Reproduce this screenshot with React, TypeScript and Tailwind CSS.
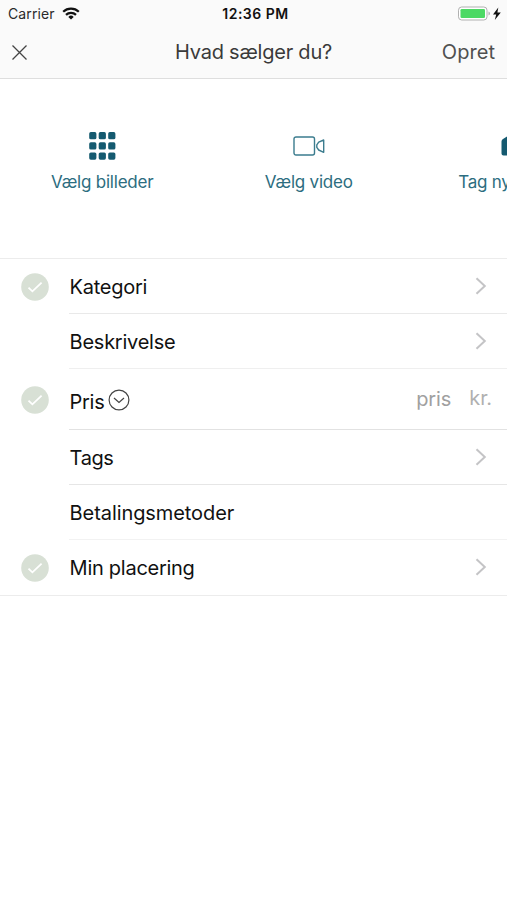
import type { ReactNode } from "react";

interface FormRow {
  label: string;
  labelClass: string;
  rowClass: string;
  checked?: boolean;
  chevron?: boolean;
  price?: boolean;
}

const rows: FormRow[] = [
  { label: "Kategori", labelClass: "tracking-[-0.25px]", rowClass: "h-[55px] border-[#e9e9e9]", checked: true, chevron: true },
  { label: "Beskrivelse", labelClass: "tracking-[-0.25px]", rowClass: "h-[55px] border-[#efefef]", chevron: true },
  { label: "Pris", labelClass: "tracking-[-0.3px]", rowClass: "h-[61px] border-[#e2e2e2]", checked: true, price: true },
  { label: "Tags", labelClass: "tracking-[-0.4px]", rowClass: "h-[55px] border-[#e6e6e6]", chevron: true },
  { label: "Betalingsmetoder", labelClass: "tracking-[-0.08px]", rowClass: "h-[55px] border-[#f2f2f2]" },
  { label: "Min placering", labelClass: "tracking-[-0.27px]", rowClass: "h-[55px] border-transparent", checked: true, chevron: true },
];

function StatusBar() {
  return (
    <div className="grid h-[27px] grid-cols-3 items-center">
      <div className="flex items-center gap-[7px] pl-2">
        <span className="text-[14px] leading-none tracking-[0.12px] text-[#2a2a2a]">Carrier</span>
        <svg width="18" height="13" viewBox="0 0 18 13" fill="none" stroke="#111" strokeWidth="2.2">
          <path d="M1.2 4.8a11.2 11.2 0 0 1 15.6 0" />
          <path d="M4 7.9a7.1 7.1 0 0 1 10 0" />
          <path d="M9 12.6 6.3 9.9a3.9 3.9 0 0 1 5.4 0Z" fill="#111" stroke="none" />
        </svg>
      </div>
      <span className="whitespace-nowrap pl-1 text-center text-[14px] font-semibold leading-none tracking-[0.5px] text-[#111]">12:36 PM</span>
      <div className="flex items-center justify-end pr-[5px]">
        <svg width="45" height="16" viewBox="0 0 45 16">
          <rect x="1.500" y="1" width="28.500" height="13" rx="3.200" fill="#fff" stroke="#b0b0b0" />
          <rect x="3.500" y="3" width="24.500" height="9" rx="1.300" fill="#4cd964" />
          <path d="M31.500 5.500v4c2-.7 2-3.300 0-4Z" fill="#b0b0b0" />
          <path d="M41.300 1.500 36 8.500h3.200l-1.400 5.500 6-7.500h-3.400Z" fill="#111" />
        </svg>
      </div>
    </div>
  );
}

function NavBar() {
  return (
    <div className="grid h-[51px] grid-cols-[100px_1fr_100px] items-center pb-px text-[20px] leading-none text-[#3a3a3a]">
      <svg className="ml-3" width="15" height="15" viewBox="0 0 15 15" stroke="#444" strokeWidth="1.3">
        <path d="M0.500 0.500 14.500 14.500M14.500 0.500 0.500 14.500" />
      </svg>
      <h1 className="text-center tracking-[-0.22px]">Hvad sælger du?</h1>
      <span className="pr-3 text-right tracking-[0.05px] text-[#505050]">Opret</span>
    </div>
  );
}

function MediaOption({ label, children }: { label: string; children: ReactNode }) {
  return (
    <div className="flex w-[206.5px] shrink-0 flex-col items-center">
      <div className="flex h-[30px] items-center">{children}</div>
      <span className="mt-[11px] whitespace-nowrap text-[17px] leading-[20px] tracking-[-0.22px]">{label}</span>
    </div>
  );
}

function GridIcon() {
  return (
    <svg width="27" height="28" viewBox="0 0 27 28" fill="#155a70">
      {[0, 10.2, 20.4].map((y) =>
        [0, 9.5, 19].map((x) => <rect key={`${x}-${y}`} x={x + 0.2} y={y + 0.1} width="7.200" height="7.200" rx="1.600" />)
      )}
    </svg>
  );
}

function VideoIcon() {
  return (
    <svg width="32" height="20" viewBox="0 0 32 20" fill="none" stroke="#3b7c8e" strokeWidth="1.400" strokeLinejoin="round">
      <rect x="1" y="1" width="20.500" height="18" rx="2" />
      <path d="M30.700 4v12.300l-5-2.300-1.900-2.600V8.800l1.900-2.600Z" />
    </svg>
  );
}

function CameraIcon() {
  return (
    <svg width="28" height="20" viewBox="0 0 28 20">
      <path d="M2 3 7 0h14l5 3a3 3 0 0 1 1.500 2.500v12A2 2 0 0 1 25.500 19.500h-23a2 2 0 0 1-2-2v-12A3 3 0 0 1 2 3Z" fill="#155a70" />
      <circle cx="14" cy="11" r="5" fill="#fff" />
    </svg>
  );
}

function CheckBadge() {
  return (
    <svg width="28" height="28" viewBox="0 0 28 28" fill="none">
      <circle cx="14" cy="14" r="13.800" fill="#d8e0d5" />
      <path d="m7.500 14.600 3.900 3.700 9.200-8.600" stroke="#fff" strokeWidth="1.800" />
    </svg>
  );
}

function Chevron() {
  return (
    <svg className="mr-5" width="12" height="18" viewBox="0 0 12 18" fill="none" stroke="#c4c4c6" strokeWidth="2">
      <path d="m1.500 1.200 8.300 7.800-8.300 7.800" />
    </svg>
  );
}

function Row({ row }: { row: FormRow }) {
  return (
    <div className="flex">
      <div className="flex w-[69px] items-center pl-[21px]">{row.checked && <CheckBadge />}</div>
      <div className={`flex flex-1 items-center justify-between border-b ${row.rowClass}`}>
        <div className={`flex items-center gap-1 pl-[0.6px] ${row.price ? "pt-1.5" : "pt-0.5"}`}>
          <span className={`text-[20px] leading-[24px] text-[#111] ${row.labelClass}`}>{row.label}</span>
          {row.price && (
            <svg className="-mt-1" width="22" height="22" viewBox="0 0 22 22" fill="none" stroke="#444" strokeWidth="1.200">
              <circle cx="11" cy="11" r="9.900" />
              <path d="m6 9 5 4.500L16 9" />
            </svg>
          )}
        </div>
        {row.price && (
          <div className="flex gap-[18px] pr-[15px] text-[20px] leading-[24px]">
            <span className="tracking-[-0.1px] text-[#a0a0a0]">pris</span>
            <span className="-mt-px tracking-[-0.1px] text-[#b0b0b0]">kr.</span>
          </div>
        )}
        {row.chevron && <Chevron />}
      </div>
    </div>
  );
}

export default function App() {
  return (
    <div className="h-[900px] w-[507px] overflow-hidden bg-white font-['Inter','Liberation_Sans',sans-serif]">
      <header className="border-b border-[#dedede] bg-[#fafafa]">
        <StatusBar />
        <NavBar />
      </header>

      <section className="-ml-px flex h-[179px] overflow-hidden pt-[52px] text-[#2c6d80]">
        <MediaOption label="Vælg billeder">
          <GridIcon />
        </MediaOption>
        <MediaOption label="Vælg video">
          <VideoIcon />
        </MediaOption>
        <MediaOption label="Tag nyt billede">
          <CameraIcon />
        </MediaOption>
      </section>

      <main className="border-y border-[#ececec]">
        {rows.map((row) => (
          <Row key={row.label} row={row} />
        ))}
      </main>
    </div>
  );
}
